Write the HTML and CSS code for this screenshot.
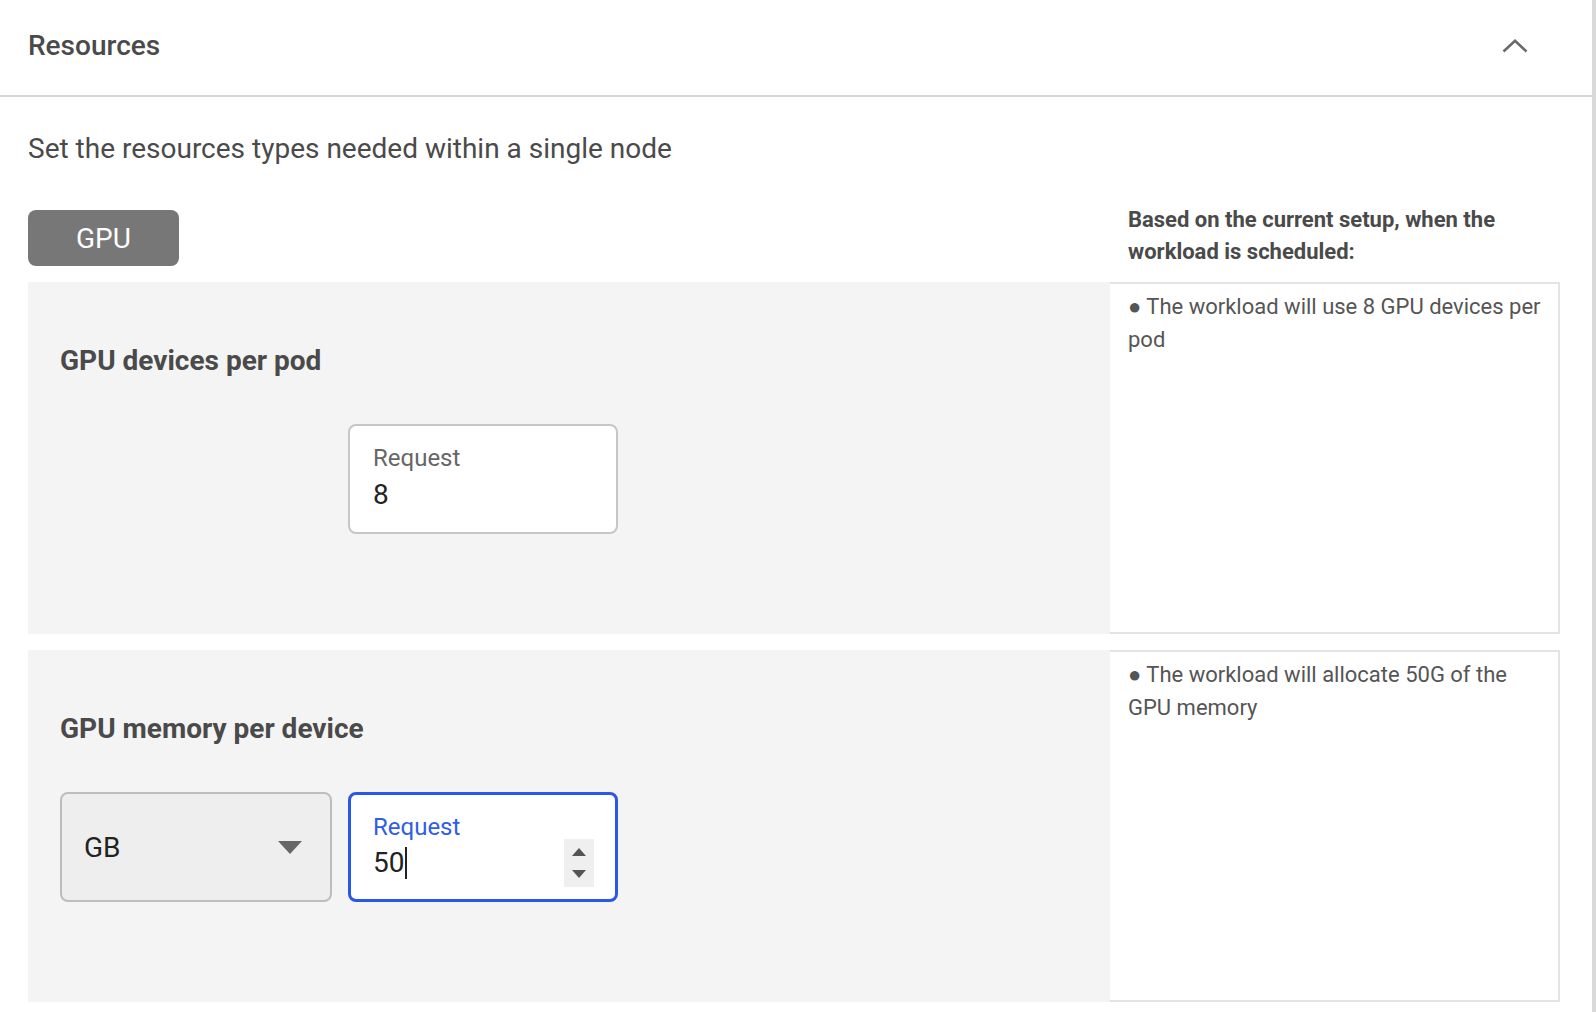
FILE: index.html
```html
<!DOCTYPE html>
<html lang="en">
<head>
<meta charset="utf-8">
<title>Resources</title>
<link rel="stylesheet" href="styles.css">
</head>
<body>
<div class="page">
  <div class="header">
    <div class="title">Resources</div>
    <svg class="chevron" width="26" height="14" viewBox="0 0 26 14"><polyline points="1.5,12.5 13,1.8 24.5,12.5" fill="none" stroke="#6a6a6a" stroke-width="2.6"/></svg>
  </div>
  <div class="content">
    <div class="subtitle">Set the resources types needed within a single node</div>
    <div class="grid">
      <div class="tabcell"><div class="tab">GPU</div></div>
      <div class="summary-head">Based on the current setup, when the workload is scheduled:</div>

      <div class="panel">
        <div class="panel-title">GPU devices per pod</div>
        <div class="fields">
          <div class="slot"></div>
          <div class="field">
            <div class="field-label">Request</div>
            <div class="field-value">8</div>
          </div>
        </div>
      </div>
      <div class="summary">● The workload will use 8 GPU devices per pod</div>

      <div class="panel">
        <div class="panel-title">GPU memory per device</div>
        <div class="fields">
          <div class="select">
            <span class="select-value">GB</span>
            <svg class="select-arrow" width="24" height="13" viewBox="0 0 24 13"><polygon points="0,0 24,0 12,13" fill="#666"/></svg>
          </div>
          <div class="field focused">
            <div class="field-label">Request</div>
            <div class="field-value">50<span class="caret"></span></div>
            <div class="spinner">
              <svg width="14" height="8" viewBox="0 0 14 8"><polygon points="7,0 14,8 0,8" fill="#555"/></svg>
              <svg width="14" height="8" viewBox="0 0 14 8"><polygon points="0,0 14,0 7,8" fill="#555"/></svg>
            </div>
          </div>
        </div>
      </div>
      <div class="summary">● The workload will allocate 50G of the GPU memory</div>
    </div>
  </div>
</div>
</body>
</html>
```
FILE: styles.css
```css
html, body {
  margin: 0;
  padding: 0;
  background: #ffffff;
}
body {
  font-family: Roboto, "Liberation Sans", Arial, sans-serif;
  color: #4a4a4a;
}
.page {
  width: 1596px;
  box-sizing: border-box;
  min-height: 1012px;
  border-right: 4px solid #d9d9d9;
}
.header {
  height: 91px;
  border-bottom: 2px solid #d6d6d6;
  display: flex;
  align-items: center;
  justify-content: space-between;
  padding: 0 64px 4px 28px;
}
.title {
  font-size: 28px;
  font-weight: 500;
  color: #4a4a4a;
  line-height: 32px;
}
.chevron {
  display: block;
}
.content {
  padding: 0 32px 0 28px;
}
.subtitle {
  margin-top: 36px;
  font-size: 28px;
  line-height: 32px;
  color: #4a4a4a;
}
.grid {
  display: grid;
  grid-template-columns: 1082px 450px;
  grid-template-rows: 66px 352px 352px;
  row-gap: 16px;
  margin-top: 35px;
}
.tabcell {
  display: flex;
  align-items: flex-end;
}
.tab {
  width: 151px;
  height: 56px;
  background: #777777;
  color: #ffffff;
  border-radius: 8px;
  font-size: 28px;
  display: flex;
  align-items: center;
  justify-content: center;
}
.summary-head {
  padding: 4px 0 0 18px;
  font-size: 22px;
  font-weight: 700;
  line-height: 32px;
  color: #4a4a4a;
}
.panel {
  background: #f4f4f4;
  padding: 63px 0 0 32px;
  box-sizing: border-box;
}
.panel-title {
  font-size: 28px;
  font-weight: 700;
  line-height: 32px;
  color: #4a4a4a;
}
.fields {
  display: flex;
  gap: 16px;
  margin-top: 47px;
}
.slot {
  width: 272px;
}
.field {
  position: relative;
  width: 270px;
  height: 110px;
  box-sizing: border-box;
  background: #ffffff;
  border: 2px solid #c6c6c6;
  border-radius: 8px;
  padding: 18px 0 0 23px;
}
.field.focused {
  border: 3px solid #2a56ee;
  padding: 18px 0 0 22px;
}
.field-label {
  font-size: 24px;
  line-height: 28px;
  color: #666666;
}
.field.focused .field-label {
  color: #2f5de8;
}
.field-value {
  margin-top: 6px;
  font-size: 28px;
  line-height: 34px;
  color: #222222;
  display: flex;
  align-items: center;
}
.field.focused .field-value {
  margin-top: 5px;
}
.caret {
  display: inline-block;
  width: 2px;
  height: 32px;
  background: #222222;
  margin-left: 1px;
}
.spinner {
  position: absolute;
  right: 21px;
  top: 44px;
  width: 30px;
  height: 48px;
  background: #efefef;
  display: flex;
  flex-direction: column;
  align-items: center;
  justify-content: space-between;
  padding: 9px 0 9px;
  box-sizing: border-box;
}
.spinner svg {
  display: block;
}
.select {
  width: 272px;
  height: 110px;
  box-sizing: border-box;
  background: #eeeeee;
  border: 2px solid #bdbdbd;
  border-radius: 8px;
  display: flex;
  align-items: center;
  justify-content: space-between;
  padding: 0 28px 0 22px;
}
.select-value {
  font-size: 28px;
  color: #222222;
}
.select-arrow {
  display: block;
}
.summary {
  background: #ffffff;
  border: 2px solid #e4e4e4;
  border-left: none;
  padding: 6px 16px 0 18px;
  font-size: 22px;
  line-height: 33px;
  color: #555555;
}
```
